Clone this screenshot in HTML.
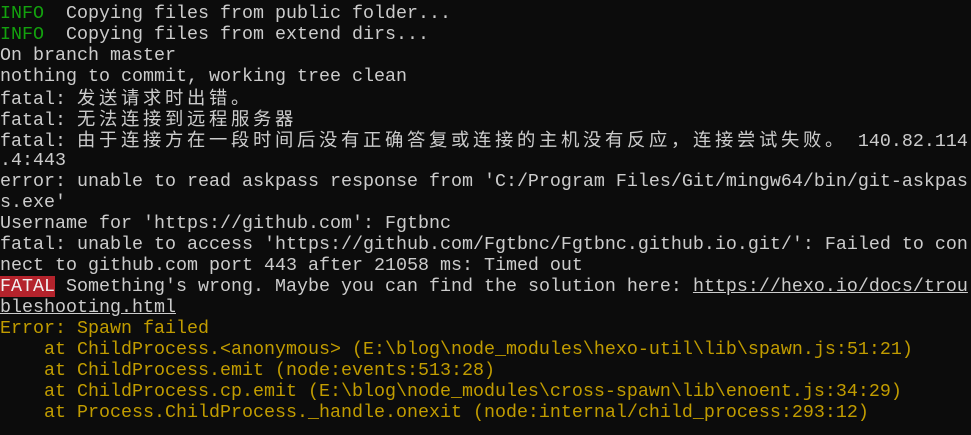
<!DOCTYPE html>
<html><head><meta charset="utf-8"><style>
html,body{margin:0;padding:0;background:#0c0c0c;width:971px;height:435px;overflow:hidden}
.t{position:absolute;left:0;top:3px;font-family:"Liberation Mono","Noto Sans CJK SC",monospace;font-size:18.33px;line-height:21px;color:#cccccc}
.t div{height:21px;white-space:pre}
.g{color:#13a10e}.y{color:#c19c00}
.c{font-family:"Noto Sans CJK SC","WenQuanYi Zen Hei",sans-serif;letter-spacing:3.67px}
.f{background:#b4232c;color:#f2f2f2}
.u{text-decoration:underline}
</style></head><body><div class="t"><div><span class="g">INFO</span>  Copying files from public folder...</div><div><span class="g">INFO</span>  Copying files from extend dirs...</div><div>On branch master</div><div>nothing to commit, working tree clean</div><div>fatal: <span class="c">发送请求时出错。</span></div><div>fatal: <span class="c">无法连接到远程服务器</span></div><div>fatal: <span class="c">由于连接方在一段时间后没有正确答复或连接的主机没有反应，连接尝试失败。</span> 140.82.114</div><div>.4:443</div><div>error: unable to read askpass response from 'C:/Program Files/Git/mingw64/bin/git-askpas</div><div>s.exe'</div><div>Username for 'https://github.com': Fgtbnc</div><div>fatal: unable to access 'https://github.com/Fgtbnc/Fgtbnc.github.io.git/': Failed to con</div><div>nect to github.com port 443 after 21058 ms: Timed out</div><div><span class="f">FATAL</span> Something's wrong. Maybe you can find the solution here: <span class="u">https://hexo.io/docs/trou</span></div><div><span class="u">bleshooting.html</span></div><div class="y">Error: Spawn failed</div><div class="y">    at ChildProcess.&lt;anonymous&gt; (E:\blog\node_modules\hexo-util\lib\spawn.js:51:21)</div><div class="y">    at ChildProcess.emit (node:events:513:28)</div><div class="y">    at ChildProcess.cp.emit (E:\blog\node_modules\cross-spawn\lib\enoent.js:34:29)</div><div class="y">    at Process.ChildProcess._handle.onexit (node:internal/child_process:293:12)</div></div></body></html>
